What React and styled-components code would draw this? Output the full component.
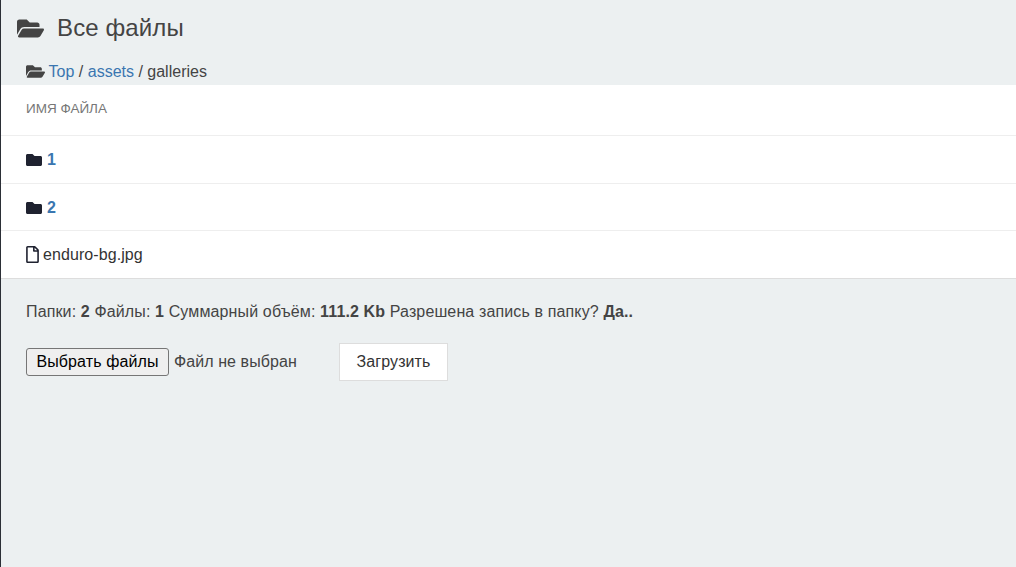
import React from 'react';
import styled, { createGlobalStyle } from 'styled-components';
import { FaFolderOpen, FaFolder, FaRegFile } from 'react-icons/fa';

const GlobalStyle = createGlobalStyle`
  html, body {
    margin: 0;
    padding: 0;
    background: #ecf0f1;
  }
  body {
    font-family: "Liberation Sans", Arial, sans-serif;
    font-size: 16px;
    color: #444;
  }
`;

const Page = styled.div`
  height: 567px;
  box-sizing: border-box;
  border-left: 1px solid #2b2f36;
  overflow: hidden;
`;

const PageHeader = styled.div`
  display: flex;
  align-items: center;
  height: 56px;
  padding-left: 16px;
  box-sizing: border-box;
`;

const Title = styled.h1`
  margin: 0 0 0 13px;
  font-size: 24px;
  font-weight: 400;
  line-height: 28px;
  letter-spacing: 0.12px;
  color: #444;
`;

const Crumbs = styled.div`
  display: flex;
  align-items: center;
  box-sizing: border-box;
  height: 29px;
  padding: 2px 0 0 25px;
  line-height: 27px;
  color: #444;
`;

const CrumbText = styled.span`
  margin-left: 3.6px;
  white-space: pre;
`;

const Link = styled.a`
  color: #3a76b0;
  text-decoration: none;
  font-weight: ${(p) => (p.$bold ? 700 : 400)};
`;

const Table = styled.div`
  background: #fff;
  border-bottom: 1px solid #ddd;
`;

const HeadRow = styled.div`
  display: flex;
  align-items: center;
  box-sizing: content-box;
  height: 47px;
  padding: 0 0 3px 25px;
  border-bottom: 1px solid #eee;
  font-size: 13.5px;
  text-transform: uppercase;
  color: #777;
`;

const Row = styled.div`
  display: flex;
  align-items: center;
  height: ${(p) => p.$height}px;
  padding: ${(p) => p.$nudge || 0}px 0 0 25px;
  box-sizing: border-box;
  border-bottom: ${(p) => (p.$last ? 'none' : '1px solid #eee')};
  color: #1f2230;
`;

const RowName = styled.span`
  margin-left: ${(p) => p.$gap}px;
  letter-spacing: 0.08px;
  color: #333;
`;

const FileIcon = styled(FaRegFile)`
  width: 13px;
  height: 17px;
`;

const Summary = styled.p`
  margin: 24px 0 0 25px;
  line-height: 18px;
  letter-spacing: 0.13px;
  color: #444;
`;

const UploadForm = styled.form`
  display: flex;
  align-items: center;
  margin: 22px 0 0 25px;
`;

const FileButton = styled.button`
  box-sizing: border-box;
  width: 143px;
  height: 28px;
  padding: 0;
  background: #efefef;
  border: 1px solid #767676;
  border-radius: 3px;
  font-family: inherit;
  font-size: 16px;
  letter-spacing: 0.1px;
  color: #000;
`;

const FileHint = styled.span`
  width: 165px;
  margin-left: 5px;
  letter-spacing: 0.08px;
  color: #444;
`;

const SubmitButton = styled.button`
  box-sizing: border-box;
  width: 109px;
  height: 38px;
  padding: 0;
  background: #fff;
  border: 1px solid #ddd;
  font-family: inherit;
  font-size: 16px;
  letter-spacing: 0.1px;
  color: #333;
`;

export default function App() {
  return (
    <Page>
      <GlobalStyle />
      <PageHeader>
        <FaFolderOpen size={27} color="#444" />
        <Title>Все файлы</Title>
      </PageHeader>
      <Crumbs>
        <FaFolderOpen size={19} color="#444" />
        <CrumbText>
          <Link href="#">Top</Link> / <Link href="#">assets</Link> / galleries
        </CrumbText>
      </Crumbs>
      <Table>
        <HeadRow>Имя файла</HeadRow>
        <Row $height={48}>
          <FaFolder size={16} />
          <RowName $gap={5}><Link href="#" $bold>1</Link></RowName>
        </Row>
        <Row $height={47} $nudge={1}>
          <FaFolder size={16} />
          <RowName $gap={5}><Link href="#" $bold>2</Link></RowName>
        </Row>
        <Row $height={47} $last>
          <FileIcon />
          <RowName $gap={4}>enduro-bg.jpg</RowName>
        </Row>
      </Table>
      <Summary>
        Папки: <b>2</b> Файлы: <b>1</b> Суммарный объём: <b>111.2 Kb</b> Разрешена запись в папку? <b>Да..</b>
      </Summary>
      <UploadForm onSubmit={(e) => e.preventDefault()}>
        <FileButton type="button">Выбрать файлы</FileButton>
        <FileHint>Файл не выбран</FileHint>
        <SubmitButton type="submit">Загрузить</SubmitButton>
      </UploadForm>
    </Page>
  );
}
